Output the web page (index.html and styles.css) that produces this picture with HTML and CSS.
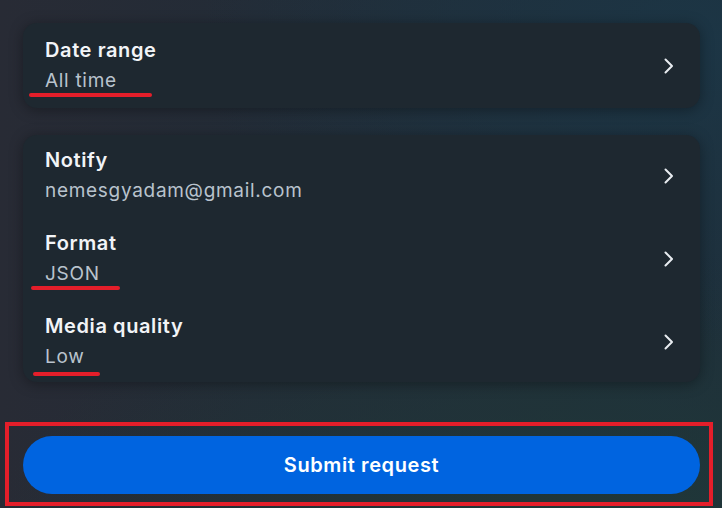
FILE: index.html
```html
<!DOCTYPE html>
<html>
<head>
<meta charset="utf-8">
<link rel="stylesheet" href="styles.css">
</head>
<body>
<div class="page">
  <div class="card card-first">
    <div class="row">
      <div class="text">
        <div class="title">Date range</div>
        <div class="value">All time</div>
      </div>
      <svg class="chev" width="10" height="16" viewBox="0 0 10 16"><path d="M1.5 1.5 L8 8 L1.5 14.5" fill="none" stroke="#e8ecf0" stroke-width="2" stroke-linecap="round" stroke-linejoin="round"/></svg>
      <span class="mark mark-time"></span>
    </div>
  </div>
  <div class="card card-list">
    <div class="row">
      <div class="text">
        <div class="title">Notify</div>
        <div class="value">nemesgyadam@gmail.com</div>
      </div>
      <svg class="chev" width="10" height="16" viewBox="0 0 10 16"><path d="M1.5 1.5 L8 8 L1.5 14.5" fill="none" stroke="#e8ecf0" stroke-width="2" stroke-linecap="round" stroke-linejoin="round"/></svg>
    </div>
    <div class="row">
      <div class="text">
        <div class="title">Format</div>
        <div class="value">JSON</div>
      </div>
      <svg class="chev" width="10" height="16" viewBox="0 0 10 16"><path d="M1.5 1.5 L8 8 L1.5 14.5" fill="none" stroke="#e8ecf0" stroke-width="2" stroke-linecap="round" stroke-linejoin="round"/></svg>
      <span class="mark mark-json"></span>
    </div>
    <div class="row">
      <div class="text">
        <div class="title">Media quality</div>
        <div class="value">Low</div>
      </div>
      <svg class="chev" width="10" height="16" viewBox="0 0 10 16"><path d="M1.5 1.5 L8 8 L1.5 14.5" fill="none" stroke="#e8ecf0" stroke-width="2" stroke-linecap="round" stroke-linejoin="round"/></svg>
      <span class="mark mark-low"></span>
    </div>
  </div>
  <div class="submit-frame">
    <button class="submit">Submit request</button>
  </div>
</div>
</body>
</html>
```
FILE: styles.css
```css
html, body {
  margin: 0;
  padding: 0;
}
body {
  width: 722px;
  height: 508px;
  overflow: hidden;
  font-family: "Inter", "Noto Sans", sans-serif;
  background:
    radial-gradient(ellipse 520px 300px at 720px 40px, rgba(28, 54, 70, 0.9), rgba(28, 54, 70, 0) 100%),
    radial-gradient(ellipse 600px 260px at 600px 520px, rgba(32, 56, 56, 0.9), rgba(32, 56, 56, 0) 100%),
    linear-gradient(90deg, #282b35 0%, #232c37 35%, #1e2f3b 100%);
}
.page {
  display: flex;
  flex-direction: column;
  padding: 23px 22px 0 23px;
}
.card {
  background: #1e2830;
  border-radius: 14px;
  box-shadow: 0 2px 14px rgba(0, 0, 0, 0.35);
}
.card-first {
  margin-bottom: 27px;
}
.row {
  position: relative;
  display: flex;
  align-items: center;
  justify-content: space-between;
  padding: 13px 26px 15px 22px;
}
.card-first .row {
  padding-top: 15px;
  padding-bottom: 15px;
}
.card-list .row:last-child {
  padding-bottom: 13px;
}
.text {
  display: flex;
  flex-direction: column;
  gap: 7px;
}
.title {
  color: #f2f4f7;
  font-size: 20px;
  font-weight: 600;
  line-height: 24px;
  letter-spacing: 0.6px;
}
.value {
  color: #b9c3cd;
  font-size: 19px;
  font-weight: 400;
  line-height: 24px;
  letter-spacing: 0.7px;
}
.chev {
  display: block;
}
.mark {
  position: absolute;
  height: 4px;
  border-radius: 2px;
  background: #e41e2a;
}
.mark-time { left: 6px; width: 123px; bottom: 11px; }
.mark-json { left: 8px; width: 89px; bottom: 11px; }
.mark-low { left: 10px; width: 67px; bottom: 6px; }
.submit-frame {
  margin: 40px -13px 0 -18px;
  border: 4px solid #e41e2a;
  padding: 10px 9px 8px 14px;
}
.submit {
  display: block;
  width: 100%;
  height: 58px;
  border: none;
  border-radius: 29px;
  background: #0064e0;
  color: #ffffff;
  font-family: "Inter", "Noto Sans", sans-serif;
  font-size: 20px;
  font-weight: 600;
  letter-spacing: 0.6px;
}
```
